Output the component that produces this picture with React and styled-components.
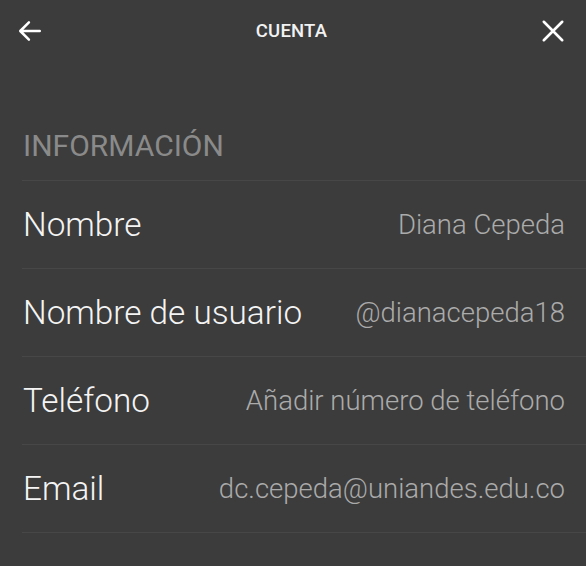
import React from "react";
import styled, { createGlobalStyle } from "styled-components";

const Global = createGlobalStyle`
  html, body { margin: 0; padding: 0; background: #3c3c3c; }
  body { font-family: Roboto, "Noto Sans", sans-serif; -webkit-font-smoothing: antialiased; }
  * { box-sizing: border-box; }
`;

const Screen = styled.div`
  width: 586px;
  height: 566px;
  background: #3c3c3c;
  overflow: hidden;
`;

const Header = styled.div`
  display: flex;
  align-items: center;
  justify-content: space-between;
  height: 62px;
  padding: 0 20px 0 17px;
`;

const IconButton = styled.div`
  width: 26px;
  height: 26px;
  display: flex;
  align-items: center;
  justify-content: center;
  color: #ffffff;
`;

const Title = styled.div`
  font-size: 18.5px;
  font-weight: 500;
  color: #f2f2f2;
  letter-spacing: 0.2px;
`;

const Section = styled.div`
  padding-left: 22px;
  margin-top: 67px;
`;

const SectionTitle = styled.div`
  font-size: 30px;
  color: #8a8a8a;
  font-weight: 400;
  line-height: 34px;
  height: 51px;
  padding-left: 1px;
`;

const Row = styled.div`
  display: flex;
  align-items: center;
  justify-content: space-between;
  height: 88px;
  border-top: 1px solid #474747;
  padding-right: 21px;
`;

const Label = styled.div`
  font-size: 33.3px;
  color: #f4f4f4;
  font-weight: 300;
  padding-left: 1px;
`;

const Value = styled.div`
  font-size: 27.5px;
  color: #ababab;
  font-weight: 300;
`;

const BottomLine = styled.div`
  border-top: 1px solid #474747;
`;

const rows = [
  ["Nombre", "Diana Cepeda"],
  ["Nombre de usuario", "@dianacepeda18"],
  ["Teléfono", "Añadir número de teléfono"],
  ["Email", "dc.cepeda@uniandes.edu.co"],
];

export default function App() {
  return (
    <Screen>
      <Global />
      <Header>
        <IconButton>
          <svg width="26" height="26" viewBox="0 0 24 24" fill="none" stroke="currentColor" strokeWidth="2.3" strokeLinecap="round" strokeLinejoin="round">
            <path d="M21 12H3.5M11 4l-8 8 8 8" />
          </svg>
        </IconButton>
        <Title>CUENTA</Title>
        <IconButton>
          <svg width="26" height="26" viewBox="0 0 24 24" fill="none" stroke="currentColor" strokeWidth="2.4" strokeLinecap="round">
            <path d="M3.5 3.5l17 17M20.5 3.5l-17 17" />
          </svg>
        </IconButton>
      </Header>
      <Section>
        <SectionTitle>INFORMACIÓN</SectionTitle>
        {rows.map(([l, v]) => (
          <Row key={l}>
            <Label>{l}</Label>
            <Value>{v}</Value>
          </Row>
        ))}
        <BottomLine />
      </Section>
    </Screen>
  );
}
